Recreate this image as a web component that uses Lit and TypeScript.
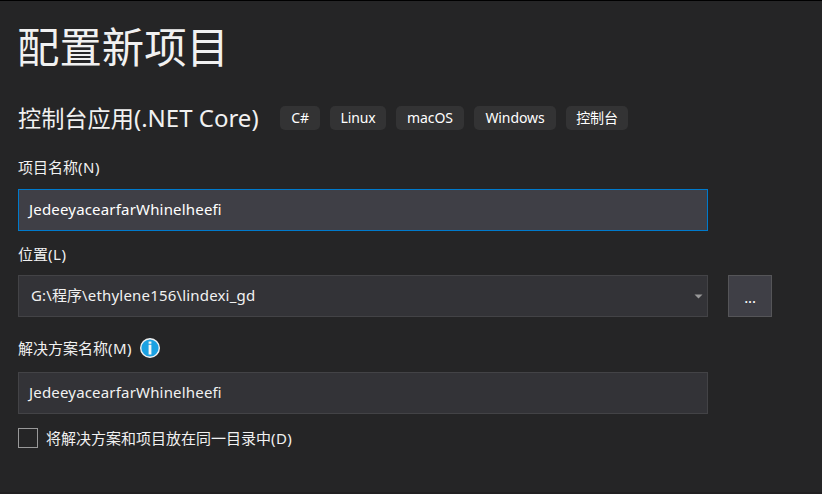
import { LitElement, html, css } from "lit";
import { customElement } from "lit/decorators.js";

@customElement("app-root")
export class AppRoot extends LitElement {
  static styles = css`
    :host {
      display: block;
      box-sizing: border-box;
      width: 822px;
      height: 494px;
      padding: 0 0 0 18px;
      border-top: 1px solid #000;
      border-bottom: 2px solid #211f21;
      background: #252526;
      color: #f1f1f1;
      font: 15px "Noto Sans CJK SC", sans-serif;
      overflow: hidden;
    }
    * { box-sizing: border-box; }
    div, span, h1, label { white-space: nowrap; }
    .lat {
      font-family: "Noto Sans", "Noto Sans CJK SC", sans-serif; font-size: 15px;
      letter-spacing: 0.18px; font-feature-settings: "liga" 1;
    }
    h1 { margin: 17px 0 0 -1px; font-size: 42.4px; font-weight: 400; line-height: 54px; height: 54px; }
    .template { display: flex; align-items: center; height: 32px; margin-top: 30px; }
    .name { width: 262px; font-size: 23.2px; line-height: 30px; height: 32px; }
    .name .lat { font-size: 24px; letter-spacing: 0; }
    .tags { display: flex; gap: 10px; }
    .tag {
      height: 24px; border-radius: 5px; background: #333334; color: #fff;
      font-size: 14px; line-height: 24px; text-align: center; letter-spacing: -0.1px;
    }
    .cjk { line-height: 22px; }
    .w40 { width: 40px; } .w56 { width: 56px; } .w68 { width: 68px; }
    .w82 { width: 82px; } .w62 { width: 62px; }
    .label { display: flex; align-items: center; height: 20px; line-height: 20px; }
    .label .lat { letter-spacing: 0.5px; }
    .l1 { margin-top: 23px; }
    .l2 { margin-top: 13px; }
    .l3 { margin-top: 21px; }
    .field {
      display: flex; align-items: center; width: 690px; height: 42px; padding: 0 0 2px 10px;
      border: 1px solid #434346; background: #333337;
    }
    .focus { margin-top: 12px; border-color: #007acc; background: #3f3f46; color: #fff; }
    .row { display: flex; gap: 20px; margin-top: 11px; }
    .combo { justify-content: space-between; padding: 0 4px 0 12px; }
    .path { padding-bottom: 3px; }
    .browse {
      width: 44px; height: 42px; border: 1px solid #555558; background: #3f3f46; color: #fff;
      text-align: center; line-height: 42px; letter-spacing: -0.2px;
    }
    .solution { margin-top: 14px; }
    .info { margin-left: 8px; }
    .check { display: flex; align-items: center; height: 20px; margin-top: 14px; }
    .box { width: 20px; height: 20px; margin-right: 8px; border: 1px solid #999; background: #252526; }
    .caption { padding-bottom: 2px; }
    .caption .lat { letter-spacing: 0.4px; }
    svg { display: block; flex: none; }
  `;

  render() {
    return html`
      <h1>配置新项目</h1>
      <div class="template">
        <div class="name">控制台应用<span class="lat">(.NET Core)</span></div>
        <div class="tags">
          <span class="tag lat w40">C#</span>
          <span class="tag lat w56">Linux</span>
          <span class="tag lat w68">macOS</span>
          <span class="tag lat w82">Windows</span>
          <span class="tag cjk w62">控制台</span>
        </div>
      </div>
      <div class="label l1">项目名称<span class="lat">(N)</span></div>
      <div class="field focus"><span class="lat">JedeeyacearfarWhinelheefi</span></div>
      <div class="label l2">位置<span class="lat">(L)</span></div>
      <div class="row">
        <div class="field combo">
          <span class="path"><span class="lat">G:\\</span>程序<span class="lat">\\ethylene156\\lindexi_gd</span></span>
          <svg width="9" height="5" viewBox="0 0 9 5"><path d="M.5.5h8l-4 4z" fill="#999" /></svg>
        </div>
        <div class="browse lat">...</div>
      </div>
      <div class="label l3">
        解决方案名称<span class="lat">(M)</span>
        <svg class="info" width="20" height="20" viewBox="0 0 20 20">
          <circle cx="10" cy="10" r="9.3" fill="#1ba1e2" stroke="#f1f1f1" stroke-width="1.4" />
          <path d="M8.6 3.6h2.8v2.2H8.6zM8.6 6.8h2.8v9.6H8.6z" fill="#f6f6f6" />
        </svg>
      </div>
      <div class="field solution"><span class="lat">JedeeyacearfarWhinelheefi</span></div>
      <label class="check">
        <span class="box"></span><span class="caption">将解决方案和项目放在同一目录中<span class="lat">(D)</span></span>
      </label>
    `;
  }
}
